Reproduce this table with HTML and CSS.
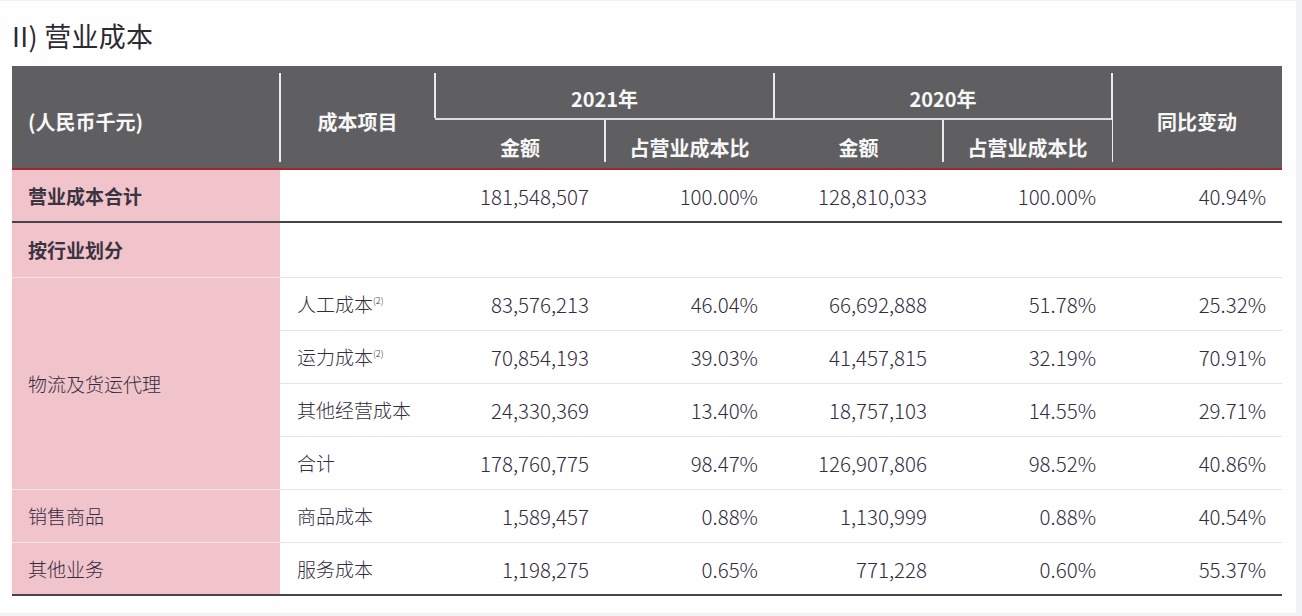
FILE: index.html
```html
<!DOCTYPE html>
<html lang="zh-CN">
<head>
<meta charset="utf-8">
<title>营业成本</title>
<link rel="stylesheet" href="styles.css">
</head>
<body>
<div class="page">
  <h2 class="title">II) 营业成本</h2>
  <table class="cost">
    <colgroup>
      <col class="c1"><col class="c2"><col class="c3"><col class="c4"><col class="c5"><col class="c6"><col class="c7">
    </colgroup>
    <thead>
      <tr>
        <th rowspan="2" class="hd-main left">(人民币千元)</th>
        <th rowspan="2" class="hd-main div">成本项目</th>
        <th colspan="2" class="hd-year div">2021年</th>
        <th colspan="2" class="hd-year div">2020年</th>
        <th rowspan="2" class="hd-main div">同比变动</th>
      </tr>
      <tr>
        <th class="hd-sub">金额</th>
        <th class="hd-sub div">占营业成本比</th>
        <th class="hd-sub">金额</th>
        <th class="hd-sub div">占营业成本比</th>
      </tr>
    </thead>
    <tbody>
      <tr class="total">
        <td class="cat strong">营业成本合计</td>
        <td></td>
        <td class="num">181,548,507</td>
        <td class="num">100.00%</td>
        <td class="num">128,810,033</td>
        <td class="num">100.00%</td>
        <td class="num">40.94%</td>
      </tr>
      <tr class="group">
        <td class="cat strong">按行业划分</td>
        <td></td><td></td><td></td><td></td><td></td><td></td>
      </tr>
      <tr>
        <td class="cat" rowspan="4">物流及货运代理</td>
        <td class="item">人工成本<sup class="note">(2)</sup></td>
        <td class="num">83,576,213</td>
        <td class="num">46.04%</td>
        <td class="num">66,692,888</td>
        <td class="num">51.78%</td>
        <td class="num">25.32%</td>
      </tr>
      <tr>
        <td class="item">运力成本<sup class="note">(2)</sup></td>
        <td class="num">70,854,193</td>
        <td class="num">39.03%</td>
        <td class="num">41,457,815</td>
        <td class="num">32.19%</td>
        <td class="num">70.91%</td>
      </tr>
      <tr>
        <td class="item">其他经营成本</td>
        <td class="num">24,330,369</td>
        <td class="num">13.40%</td>
        <td class="num">18,757,103</td>
        <td class="num">14.55%</td>
        <td class="num">29.71%</td>
      </tr>
      <tr>
        <td class="item">合计</td>
        <td class="num">178,760,775</td>
        <td class="num">98.47%</td>
        <td class="num">126,907,806</td>
        <td class="num">98.52%</td>
        <td class="num">40.86%</td>
      </tr>
      <tr>
        <td class="cat">销售商品</td>
        <td class="item">商品成本</td>
        <td class="num">1,589,457</td>
        <td class="num">0.88%</td>
        <td class="num">1,130,999</td>
        <td class="num">0.88%</td>
        <td class="num">40.54%</td>
      </tr>
      <tr class="last">
        <td class="cat">其他业务</td>
        <td class="item">服务成本</td>
        <td class="num">1,198,275</td>
        <td class="num">0.65%</td>
        <td class="num">771,228</td>
        <td class="num">0.60%</td>
        <td class="num">55.37%</td>
      </tr>
    </tbody>
  </table>
</div>
</body>
</html>
```

FILE: styles.css
```css
html, body {
  margin: 0;
  padding: 0;
}
body {
  background: #f1f2f5;
  font-family: "Noto Sans CJK SC", "Noto Sans", sans-serif;
  color: #352d3f;
}
.page {
  box-sizing: border-box;
  width: 1296px;
  height: 612px;
  margin-top: 1px;
  background: #fefefe;
  padding: 19px 0 0 12px;
}
.title {
  margin: 0 0 15px 0;
  font-size: 27px;
  line-height: 31px;
  font-weight: 400;
  color: #2c2a33;
  letter-spacing: 0.3px;
}
.cost {
  width: 1270px;
  table-layout: fixed;
  border-collapse: separate;
  border-spacing: 0;
}
.c1 { width: 268px; }
.c2 { width: 155px; }
.c3 { width: 170px; }
.c4 { width: 169px; }
.c5 { width: 169px; }
.c6 { width: 169px; }
.c7 { width: 170px; }

/* header */
.cost th {
  position: relative;
  background: #5f5f62;
  color: #f7f7f7;
  font-size: 20px;
  font-weight: 700;
  line-height: 24px;
  text-align: center;
  padding: 0;
}
.hd-main {
  padding-top: 9px !important;
  border-bottom: 2px solid #a1272d;
}
.hd-main.left {
  text-align: left;
  padding-left: 16px !important;
}
.hd-year {
  height: 38px;
  padding-top: 14px !important;
  border-bottom: 2px solid #dcdcdc;
}
.hd-sub {
  height: 41px;
  padding-top: 7px !important;
  border-bottom: 2px solid #a1272d;
}
.cost th.div::before {
  content: "";
  position: absolute;
  left: -1px;
  top: 7px;
  bottom: 6px;
  width: 2px;
  background: #ebebeb;
}
.cost th.hd-year::before {
  bottom: 0;
}
.cost th.hd-sub.div::before {
  top: 0;
}

/* body */
.cost td {
  height: 52px;
  padding: 0;
  font-size: 19px;
  font-weight: 300;
  line-height: 24px;
  border-bottom: 1px solid #e3e3ea;
  vertical-align: middle;
  background: #ffffff;
}
.cost td.cat {
  background: #f0c4ca;
  padding-left: 16px;
  border-bottom: 1px solid #f7e4e7;
}
.cost td.strong {
  font-weight: 700;
  color: #3a3340;
}
.cost td.item {
  padding-left: 17px;
}
.cost td.num {
  text-align: right;
  padding-right: 16px;
  font-size: 20.5px;
}
.cost tr.total td {
  height: 51px;
  border-bottom: 2px solid #46434b;
}
.cost tr.group td {
  height: 54px;
}
.cost tr.last td {
  height: 51px;
  border-bottom: 2px solid #46434b;
}
.cost tr.last td.cat {
  border-bottom: 2px solid #46434b;
}
.note {
  font-size: 9px;
  line-height: 0;
  vertical-align: 8px;
}
```
